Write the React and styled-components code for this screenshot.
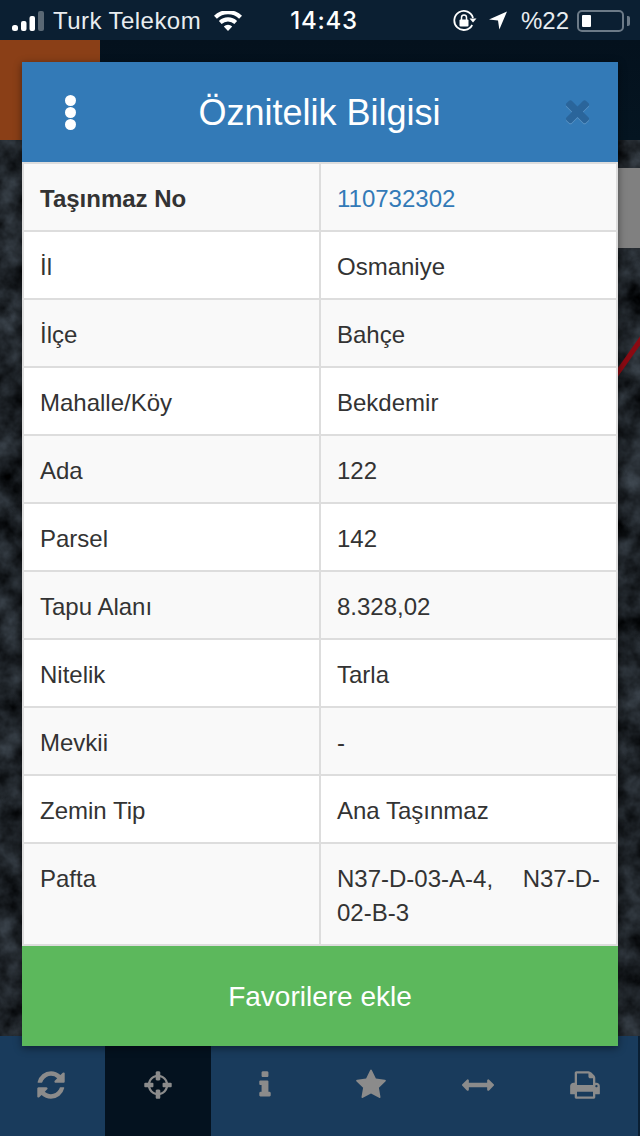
import React from "react";
import styled, { createGlobalStyle } from "styled-components";

const Global = createGlobalStyle`
  html, body { margin: 0; padding: 0; background: #0a1f33; }
  * { box-sizing: border-box; }
`;

const Page = styled.div`
  position: relative;
  width: 640px;
  height: 1136px;
  overflow: hidden;
  display: flex;
  flex-direction: column;
  font-family: "Liberation Sans", Arial, sans-serif;
  color: #333;
`;

const StatusBar = styled.div`
  height: 40px;
  flex: none;
  background: #0b1f32;
  color: #e9edf0;
  display: flex;
  align-items: center;
  padding: 1px 11px 0 12px;
  font-size: 24px;
`;
const Carrier = styled.span`
  margin-left: 9px;
  letter-spacing: 0.45px;
`;
const Wifi = styled.svg`
  margin-left: 13px;
`;
const Clock = styled.span`
  margin-left: 48px;
  font-family: Inter, "Liberation Sans", sans-serif;
  font-weight: 500;
  font-size: 24px;
  letter-spacing: 0.8px;
  color: #fff;
`;
const StatusRight = styled.div`
  margin-left: auto;
  display: flex;
  align-items: center;
`;
const LocationArrow = styled.svg`
  margin-left: 12px;
`;
const Percent = styled.span`
  margin-left: 14px;
  margin-right: 8px;
`;
const Battery = styled.div`
  position: relative;
  width: 47px;
  height: 22px;
  border: 2px solid #6c7a87;
  border-radius: 5px;
  padding: 3px;
  margin-right: 5px;
  &::after {
    content: "";
    position: absolute;
    left: 48px;
    top: 4px;
    width: 3px;
    height: 10px;
    border-radius: 0 2px 2px 0;
    background: #6c7a87;
  }
`;
const BatteryFill = styled.div`
  width: 9px;
  height: 100%;
  background: #fff;
  border-radius: 1px;
`;

const NavBar = styled.div`
  height: 100px;
  flex: none;
  background: linear-gradient(#04111d, #051521);
`;
const Brand = styled.div`
  width: 100px;
  height: 100%;
  background: #8a3f17;
`;

const MapArea = styled.div`
  position: relative;
  flex: 1;
  min-height: 0;
  background: #1d2328;
`;
const MapImage = styled.svg`
  display: block;
  width: 100%;
  height: 100%;
`;
const ScrollBlock = styled.div`
  position: absolute;
  top: 28px;
  right: 0;
  width: 22px;
  height: 80px;
  background: #808080;
`;

const TabBar = styled.div`
  height: 100px;
  flex: none;
  width: 640px;
  margin-left: -2px;
  background: #193b5c;
  display: grid;
  grid-template-columns: repeat(6, 1fr);
`;
const Tab = styled.div`
  display: flex;
  align-items: center;
  justify-content: center;
  padding-bottom: 2px;
  background: ${(p) => (p.$active ? "#04121f" : "transparent")};
`;
const TabGlyph = styled.svg`
  width: 32px;
  height: 32px;
  fill: #8b8b8b;
`;

const Modal = styled.div`
  position: absolute;
  left: 22px;
  top: 62px;
  width: 596px;
  height: 984px;
  display: flex;
  flex-direction: column;
  box-shadow: 0 2px 8px rgba(0, 0, 0, 0.45);
`;
const ModalHeader = styled.div`
  height: 100px;
  flex: none;
  background: #337ab7;
  display: grid;
  grid-template-columns: 1fr auto 1fr;
  align-items: center;
  padding: 0 23px 0 43px;
`;
const Kebab = styled.div`
  display: flex;
  flex-direction: column;
  gap: 1px;
  justify-self: start;
`;
const Dot = styled.span`
  width: 11px;
  height: 11px;
  border-radius: 50%;
  background: #fff;
`;
const Title = styled.div`
  color: #fff;
  font-size: 36px;
  line-height: 1;
  white-space: nowrap;
  padding: 2px 21px 0 0;
`;
const CloseGlyph = styled.svg`
  justify-self: end;
  width: 35px;
  height: 35px;
  margin-bottom: 3px;
  fill: #2a659b;
  filter: drop-shadow(0 1px 0 rgba(255, 255, 255, 0.2));
`;

const InfoTable = styled.table`
  width: 596px;
  flex: none;
  border-collapse: collapse;
  table-layout: fixed;
  font-size: 24px;
  line-height: 34px;
`;
const Row = styled.tr`
  background: ${(p) => (p.$odd ? "#f9f9f9" : "#fff")};
`;
const Cell = styled.td`
  border: 2px solid #ddd;
  padding: 18px 16px 14px;
  vertical-align: top;
  font-weight: ${(p) => (p.$bold ? 700 : 400)};
  color: ${(p) => (p.$link ? "#337ab7" : "#333")};
  text-align: ${(p) => (p.$justify ? "justify" : "left")};
`;
const FavButton = styled.div`
  flex: 1;
  background: #5cb85c;
  color: #fff;
  font-size: 28px;
  display: flex;
  align-items: center;
  justify-content: center;
  padding-top: 2px;
`;

const rows = [
  ["İl", "Osmaniye"],
  ["İlçe", "Bahçe"],
  ["Mahalle/Köy", "Bekdemir"],
  ["Ada", "122"],
  ["Parsel", "142"],
  ["Tapu Alanı", "8.328,02"],
  ["Nitelik", "Tarla"],
  ["Mevkii", "-"],
  ["Zemin Tip", "Ana Taşınmaz"],
];

const icons = {
  refresh:
    "M1639 1056q0 5-1 7-64 268-268 434.5t-478 166.5q-146 0-282.5-55t-243.5-157l-129 129q-19 19-45 19t-45-19-19-45v-448q0-26 19-45t45-19h448q26 0 45 19t19 45-19 45l-137 137q71 66 161 102t187 36q134 0 250-65t186-179q11-17 53-117 8-23 30-23h192q13 0 22.5 9.5t9.5 22.5zm25-800v448q0 26-19 45t-45 19h-448q-26 0-45-19t-19-45 19-45l138-138q-148-137-349-137-134 0-250 65t-186 179q-11 17-53 117-8 23-30 23h-199q-13 0-22.5-9.5t-9.5-22.5v-7q65-268 270-434.5t480-166.5q146 0 284 55.5t245 156.5l130-129q19-19 45-19t45 19 19 45z",
  crosshairs:
    "M1325 1024h-109q-26 0-45-19t-19-45v-128q0-26 19-45t45-19h109q-32-108-112.5-188.5t-188.5-112.5v109q0 26-19 45t-45 19h-128q-26 0-45-19t-19-45v-109q-108 32-188.5 112.5t-112.5 188.5h109q26 0 45 19t19 45v128q0 26-19 45t-45 19h-109q32 108 112.5 188.5t188.5 112.5v-109q0-26 19-45t45-19h128q26 0 45 19t19 45v109q108-32 188.5-112.5t112.5-188.5zm339-192v128q0 26-19 45t-45 19h-143q-37 161-154.5 278.5t-278.5 154.5v143q0 26-19 45t-45 19h-128q-26 0-45-19t-19-45v-143q-161-37-278.5-154.5t-154.5-278.5h-143q-26 0-45-19t-19-45v-128q0-26 19-45t45-19h143q37-161 154.5-278.5t278.5-154.5v-143q0-26 19-45t45-19h128q26 0 45 19t19 45v143q161 37 278.5 154.5t154.5 278.5h143q26 0 45 19t19 45z",
  info:
    "M1216 1344v128q0 26-19 45t-45 19h-512q-26 0-45-19t-19-45v-128q0-26 19-45t45-19h64v-384h-64q-26 0-45-19t-19-45v-128q0-26 19-45t45-19h384q26 0 45 19t19 45v576h64q26 0 45 19t19 45zm-128-1152v192q0 26-19 45t-45 19h-256q-26 0-45-19t-19-45v-192q0-26 19-45t45-19h256q26 0 45 19t19 45z",
  star:
    "M1728 647q0 22-26 48l-363 354 86 500q1 7 1 20 0 21-10.5 35.5t-30.5 14.5q-19 0-40-12l-449-236-449 236q-22 12-40 12-21 0-31.5-14.5t-10.5-35.5q0-6 2-20l86-500-364-354q-25-27-25-48 0-37 56-46l502-73 225-455q19-41 49-41t49 41l225 455 502 73q56 9 56 46z",
  arrows:
    "M1792 896q0 26-19 45l-256 256q-19 19-45 19t-45-19-19-45v-128h-1024v128q0 26-19 45t-45 19-45-19l-256-256q-19-19-19-45t19-45l256-256q19-19 45-19t45 19 19 45v128h1024v-128q0-26 19-45t45-19 45 19l256 256q19 19 19 45z",
  print:
    "M448 1536h896v-256h-896v256zm0-640h896v-384h-160q-40 0-68-28t-28-68v-160h-640v640zm1152 64q0-26-19-45t-45-19-45 19-19 45 19 45 45 19 45-19 19-45zm128 0v416q0 13-9.5 22.5t-22.5 9.5h-224v160q0 40-28 68t-68 28h-960q-40 0-68-28t-28-68v-160h-224q-13 0-22.5-9.5t-9.5-22.5v-416q0-79 56.5-135.5t135.5-56.5h64v-544q0-40 28-68t68-28h672q40 0 88 20t76 48l152 152q28 28 48 76t20 88v256h64q79 0 135.5 56.5t56.5 135.5z",
  times:
    "M1490 1322q0 40-28 68l-136 136q-28 28-68 28t-68-28l-294-294-294 294q-28 28-68 28t-68-28l-136-136q-28-28-28-68t28-68l294-294-294-294q-28-28-28-68t28-68l136-136q28-28 68-28t68 28l294 294 294-294q28-28 68-28t68 28l136 136q28 28 28 68t-28 68l-294 294 294 294q28 28 28 68z",
};

const tabs = ["refresh", "crosshairs", "info", "star", "arrows", "print"];

export default function App() {
  return (
    <Page>
      <Global />
      <StatusBar>
        <svg width="32" height="20" viewBox="0 0 32 20">
          <rect x="0" y="14" width="6" height="6" rx="2.5" fill="#fff" />
          <rect x="9" y="10" width="5.5" height="10" rx="2" fill="#fff" />
          <rect x="17.5" y="5" width="5.5" height="15" rx="2" fill="#fff" />
          <rect x="26" y="0" width="6" height="20" rx="2" fill="#5a6874" />
        </svg>
        <Carrier>Turk Telekom</Carrier>
        <Wifi width="28" height="20" viewBox="0 0 28 20">
          <path d="M14 20 l-4.2-4.6 a6 6 0 0 1 8.4 0 z" fill="#fff" />
          <path d="M7.6 13 l-2.7-3 a13 13 0 0 1 18.2 0 l-2.7 3 a9.2 9.2 0 0 0-12.8 0 z" fill="#fff" />
          <path d="M2.9 7.8 L0 4.8 a20 20 0 0 1 28 0 l-2.9 3 a16 16 0 0 0-22.2 0 z" fill="#fff" />
        </Wifi>
        <Clock>14:43</Clock>
        <StatusRight>
          <svg width="24" height="22" viewBox="0 0 24 22">
            <path d="M20 8 A9.5 9.5 0 1 0 19.2 15" fill="none" stroke="#fff" strokeWidth="1.8" />
            <path d="M16.5 8.5 h7 l-3.5 4 z" fill="#fff" />
            <rect x="6.5" y="9.5" width="9" height="7" rx="1" fill="#fff" />
            <path d="M8.5 10 V7.5 a2.5 2.5 0 0 1 5 0 V10" fill="none" stroke="#fff" strokeWidth="1.5" />
          </svg>
          <LocationArrow width="18" height="19" viewBox="0 0 20 20">
            <path d="M20 0 L0 9 L10 10 L11.5 20 Z" fill="#fff" />
          </LocationArrow>
          <Percent>%22</Percent>
          <Battery>
            <BatteryFill />
          </Battery>
        </StatusRight>
      </StatusBar>
      <NavBar>
        <Brand />
      </NavBar>
      <MapArea>
        <MapImage viewBox="0 0 640 896" preserveAspectRatio="none">
          <defs>
            <filter id="sat" x="0" y="0" width="100%" height="100%" colorInterpolationFilters="sRGB">
              <feTurbulence type="fractalNoise" baseFrequency="0.04" numOctaves="4" seed="7" />
              <feColorMatrix
                type="matrix"
                values="0.34 0 0 0 -0.05  0.38 0 0 0 -0.05  0.42 0 0 0 -0.05  0 0 0 0 1"
              />
            </filter>
          </defs>
          <rect width="640" height="896" filter="url(#sat)" />
          <line x1="616" y1="235" x2="642" y2="198" stroke="#8a0a12" strokeWidth="5" />
        </MapImage>
        <ScrollBlock />
      </MapArea>
      <TabBar>
        {tabs.map((name) => (
          <Tab key={name} $active={name === "crosshairs"}>
            <TabGlyph viewBox="0 0 1792 1792">
              <path d={icons[name]} />
            </TabGlyph>
          </Tab>
        ))}
      </TabBar>
      <Modal>
        <ModalHeader>
          <Kebab>
            <Dot />
            <Dot />
            <Dot />
          </Kebab>
          <Title>Öznitelik Bilgisi</Title>
          <CloseGlyph viewBox="0 0 1792 1792">
            <path d={icons.times} />
          </CloseGlyph>
        </ModalHeader>
        <InfoTable>
          <tbody>
            <Row $odd>
              <Cell $bold>Taşınmaz No</Cell>
              <Cell $link>110732302</Cell>
            </Row>
            {rows.map(([k, v], i) => (
              <Row key={k} $odd={i % 2 === 1}>
                <Cell>{k}</Cell>
                <Cell>{v}</Cell>
              </Row>
            ))}
            <Row $odd>
              <Cell>Pafta</Cell>
              <Cell $justify>N37-D-03-A-4, N37-D-02-B-3</Cell>
            </Row>
          </tbody>
        </InfoTable>
        <FavButton>Favorilere ekle</FavButton>
      </Modal>
    </Page>
  );
}
